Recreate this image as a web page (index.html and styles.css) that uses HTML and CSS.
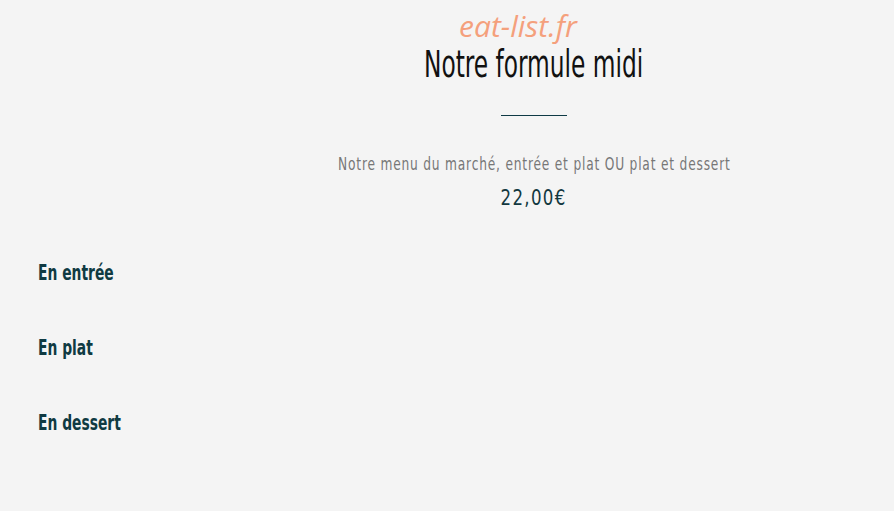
FILE: index.html
```html
<!DOCTYPE html>
<html lang="fr">
<head>
    <meta charset="UTF-8">
    <meta name="viewport" content="width=device-width, initial-scale=1.0">
    <title>Notre formule midi</title>
    <link rel="stylesheet" href="styles.css">
</head>
<body>

<div class="brand">eat-list.fr</div>

<section class="formule">
    <h1 class="formule-title">Notre formule midi</h1>
    <div class="separator"></div>
    <p class="formule-desc">Notre menu du marché, entrée et plat OU plat et dessert</p>
    <p class="formule-price">22,00€</p>
</section>

<div class="courses">
    <h2 class="course">En entrée</h2>
    <h2 class="course">En plat</h2>
    <h2 class="course">En dessert</h2>
</div>

</body>
</html>
```

FILE: styles.css
```css
body {
    font-family: 'DejaVu Sans Condensed', 'DejaVu Sans', sans-serif;
    margin: 0;
    background-color: #f4f4f4;
    height: 511px;
    overflow: hidden;
}
.brand {
    font-family: 'Open Sans', sans-serif;
    font-style: italic;
    font-size: 30px;
    color: #f4a07c;
    line-height: 38px;
    padding: 7px 0 0 459px;
    height: 38px;
}
.formule {
    display: flex;
    flex-direction: column;
    align-items: center;
    padding-left: 174px;
}
/* condensed headline look */
.formule-title {
    margin: 0;
    font-size: 37px;
    font-weight: normal;
    color: #111;
    line-height: 40px;
    transform: scaleX(0.7);
}
.separator {
    width: 66px;
    height: 1px;
    background-color: #0e3a45;
    margin: 30px 0 38px;
}
.formule-desc {
    margin: 0;
    font-size: 17px;
    letter-spacing: 1px;
    color: #777;
    line-height: 20px;
    transform: scaleX(0.8);
}
.formule-price {
    margin: 12px 0 0;
    font-size: 21px;
    letter-spacing: 1.5px;
    color: #12383f;
    line-height: 24px;
    transform: scaleX(0.88);
}
.courses {
    display: flex;
    flex-direction: column;
    gap: 50px;
    padding: 50px 0 0 38px;
    align-items: flex-start;
}
.course {
    margin: 0;
    font-size: 22px;
    font-weight: bold;
    color: #0f3a42;
    line-height: 25px;
    transform: scaleX(0.7);
    transform-origin: left center;
}
```
